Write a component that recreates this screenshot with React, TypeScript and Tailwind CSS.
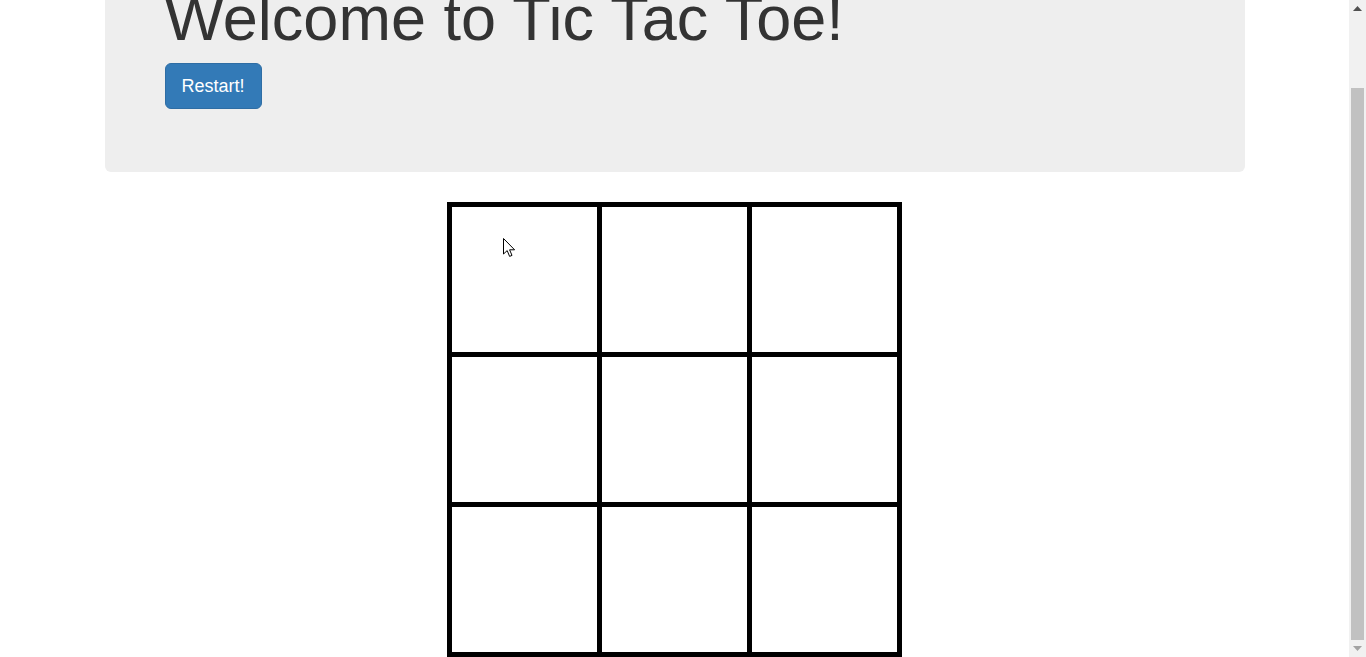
import React from "react";

const cells = Array.from({ length: 9 }, (_, i) => i);

function Cursor() {
  return (
    <svg
      className="absolute left-[503px] top-[238px] pointer-events-none"
      width="13"
      height="20"
      viewBox="0 0 13 20"
    >
      <path
        d="M0.5 0.5 L0.5 16 L4.2 12.6 L6.6 18.4 L9 17.4 L6.6 11.8 L11.6 11.8 Z"
        fill="#fff"
        stroke="#000"
        strokeWidth="1"
        strokeLinejoin="miter"
      />
    </svg>
  );
}

function Scrollbar() {
  return (
    <div className="w-[17px] h-full bg-[#f1f1f1] flex flex-col items-center shrink-0">
      <div className="h-[17px] w-full flex items-center justify-center">
        <svg width="9" height="5" viewBox="0 0 9 5">
          <path d="M4.5 0 L9 5 L0 5 Z" fill="#505050" />
        </svg>
      </div>
      <div className="flex-1 w-full px-[2px] pt-[71px] flex flex-col">
        <div className="flex-1 bg-[#c1c1c1]" />
      </div>
      <div className="h-[17px] w-full flex items-center justify-center">
        <svg width="9" height="5" viewBox="0 0 9 5">
          <path d="M0 0 L9 0 L4.5 5 Z" fill="#a3a3a3" />
        </svg>
      </div>
    </div>
  );
}

export default function App() {
  return (
    <div className="w-[1366px] h-[657px] overflow-hidden flex bg-white font-['Liberation_Sans',Arial,sans-serif] text-[#333]">
      <div className="relative flex-1 overflow-hidden">
        {/* page is shown scrolled to the bottom */}
        <div className="w-[1170px] mx-auto px-[15px] -mt-[84px]">
          <div className="bg-[#eeeeee] rounded-[6px] pt-[48px] pb-[48px] px-[60px] mb-[30px]">
            <h1 className="text-[63px] leading-[1.1] font-normal mt-[20px] mb-[10px]">
              Welcome to Tic Tac Toe!
            </h1>
            <div className="mb-[15px] flex">
              <button className="bg-[#337ab7] border border-[#2e6da4] text-white text-[18px] leading-[24px] px-[16px] py-[10px] rounded-[6px]">
                Restart!
              </button>
            </div>
          </div>
        </div>

        {/* board */}
        <div className="w-[455px] mx-auto bg-black p-[5px] grid grid-cols-3 gap-[5px]">
          {cells.map((c) => (
            <div key={c} className="h-[145px] bg-white" />
          ))}
        </div>

        <Cursor />
      </div>
      <Scrollbar />
    </div>
  );
}
